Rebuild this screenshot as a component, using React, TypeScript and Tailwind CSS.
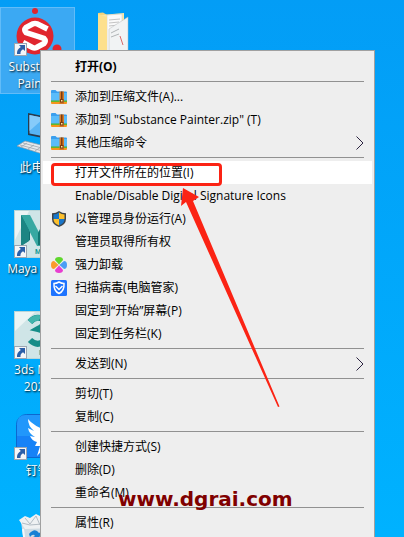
import React from 'react';

const ZipIcon = () => (
  <svg viewBox="0 0 16 16" className="size-4">
    <path d="M0 2q0-1 1-1h3.500L6 2.500h9q1 0 1 1V12H0z" fill="#3a9fee" />
    <path d="M0 4h16v7.500H0z" fill="#5abcfa" />
    <path d="M0 11.500h16V13H0z" fill="#62b92c" />
    <path d="M0 13h16v1q0 1-1 1H1q-1 0-1-1z" fill="#f7941d" />
    <path d="M8.500 2.500H13V15H8.500z" fill="#d97a25" />
    <path d="M10 2.500h1.500V10H10z" fill="#7a3c12" />
    <path d="M9 10h3.500v3.500H9z" fill="#7a3c12" />
    <path d="M10 11h1.500v1.500H10z" fill="#ffe9a0" />
  </svg>
);

const ShieldIcon = () => (
  <svg viewBox="0 0 16 16" className="size-4">
    <path d="M8 0Q5 2.200 1 2.200V8q0 5.500 7 8 7-2.500 7-8V2.200Q11 2.200 8 0z" fill="#3f4449" />
    <path d="M8 1.500Q5.500 3.300 2.500 3.500V8H8z" fill="#1976c9" />
    <path d="M8 1.500q2.500 1.800 5.500 2V8H8z" fill="#fdc02d" />
    <path d="M2.500 8q0 4.500 5.500 6.500V8z" fill="#fdc02d" />
    <path d="M13.500 8q0 4.500-5.500 6.500V8z" fill="#1976c9" />
  </svg>
);

const PetalsIcon = () => (
  <svg viewBox="0 0 16 16" className="size-4">
    <path d="M8 7.500L4 3Q4 0 8 0t4 3z" fill="#5fd72d" />
    <path d="M8 8.500L4 13q0 3 4 3t4-3z" fill="#e83ed0" />
    <path d="M7.500 8L3 4Q0 4 0 8t3 4z" fill="#fb9b2c" />
    <path d="M8.500 8L13 4q3 0 3 4t-3 4z" fill="#4c9df5" />
  </svg>
);

const GuardIcon = () => (
  <svg viewBox="0 0 16 16" className="size-4">
    <rect width="16" height="16" rx="1.500" fill="#1e74ff" />
    <path
      d="M8 2Q5.500 3.500 3 3.500q-.5 7.500 5 10 5.500-2.500 5-10Q10.500 3.500 8 2z"
      fill="none"
      stroke="#fff"
      strokeWidth="1.500"
    />
    <path d="M4.500 6L8 9.500 11.500 6" fill="none" stroke="#fff" strokeWidth="1.500" />
  </svg>
);

const ShortcutBadge = () => (
  <svg viewBox="0 0 13 13" className="absolute bottom-0 left-0 size-[13px]">
    <rect x=".5" y=".5" width="12" height="12" fill="#f4f6f8" stroke="#9aa6b2" />
    <path d="M5 2h6v6L9 6.200Q6 8 6.500 11H3Q2.500 6.500 6.800 3.900z" fill="#2b5fa8" />
  </svg>
);

const SubstanceIcon = () => (
  <svg viewBox="0 0 48 48" className="size-12">
    <circle cx="21" cy="3" r="3" fill="#e0262f" />
    <circle cx="43" cy="41" r="4.500" fill="#e0262f" />
    <circle cx="21" cy="28" r="18.500" fill="#e0262f" />
    <path
      d="M33.500 21L23 15.800Q21 15 19 15.800L12 19.500Q9.500 22 12 24.500L30 30.500Q32.500 33 30 35.500L22.500 39.500Q20.500 40.500 18.500 39.500L9 34.500"
      fill="none"
      stroke="#fff"
      strokeWidth="5.500"
    />
  </svg>
);

const FolderIcon = () => (
  <svg viewBox="0 0 48 48" className="size-12">
    <path d="M9 5l5-.5 5 3v43L9 47z" fill="#f3d27b" />
    <path d="M12 7l23-2v43H12z" fill="#fbe7a8" />
    <path d="M18 7l15-1v40H18z" fill="#fafafa" stroke="#c9c9c9" strokeWidth=".5" />
    <path d="M20 12l11-1M20 15l10-1M20 18l9-1" stroke="#c4c4c4" />
    <path d="M20 21l19-12v38H20z" fill="#f1f3f4" stroke="#b6babc" strokeWidth=".5" />
    <path d="M22 25l8-4M22 29l8-3" stroke="#b0b4b6" />
    <path d="M31 28l3 9" stroke="#d86a6a" />
    <path d="M9 6l9 3v42L9 46z" fill="#fde08d" />
  </svg>
);

const ComputerIcon = () => (
  <svg viewBox="0 0 48 48" className="size-12">
    <path d="M14 4l30 6v22L14 26z" fill="#2a3b4d" />
    <path d="M15.500 6L43 11.500V30L15.500 24.500z" fill="#58b4f4" />
    <path d="M15.500 6L30 9 15.500 22z" fill="#86cbfa" />
    <path d="M3 37l8-5 32 8-8 7z" fill="#e6eaed" stroke="#8e9aa5" strokeWidth=".7" />
    <path d="M6 36l30 8M9 34l30 8M13 34l-6 4M20 36l-6 4M27 38l-6 4M34 40l-6 4" stroke="#9aa4ad" strokeWidth=".8" />
  </svg>
);

const MayaIcon = () => (
  <svg viewBox="0 0 48 48" className="size-12">
    <rect x=".5" y=".5" width="47" height="47" fill="#cfe5e7" stroke="#b7d5d8" />
    <path d="M1 1h14L1 30z" fill="#ebf4f4" />
    <path d="M7 5l9 8v17l-9 6z" fill="#0f6e70" />
    <path d="M7 5h9l16 31h-9z" fill="#36a8a2" />
    <path d="M7 5v31l8-5V20z" fill="#1c8583" />
    <path d="M41 5h-8l-9 18v12h5z" fill="#117673" />
    <text x="21" y="44" fill="#149b98" className="font-['Roboto'] text-[7px] font-bold">MAYA</text>
  </svg>
);

const MaxIcon = () => (
  <svg viewBox="0 0 48 48" className="size-12">
    <rect x=".5" y=".5" width="47" height="47" fill="#cfe5e7" stroke="#b7d5d8" />
    <path d="M1 1h20L1 20z" fill="#ebf4f4" />
    <path
      d="M16 11Q21 5 28 7.500 35 12 24 18q13 3 7 12-8 6-15-1"
      fill="none"
      stroke="#168d88"
      strokeWidth="6"
    />
    <path d="M14 9q7-7 14-4l-4 5q-3-1-6 3z" fill="#42b5ad" />
    <text x="25" y="44" fill="#149b98" className="font-['Roboto'] text-[7px] font-bold">MAX</text>
  </svg>
);

const DingIcon = () => (
  <svg viewBox="0 0 48 48" className="size-12">
    <rect x="2.500" y="2.500" width="43" height="43" rx="10" fill="#1682f7" stroke="#0c67cf" />
    <path d="M3 12Q3 3 12 3h24q9 0 9 9v12H3z" fill="#2197fb" />
    <path
      d="M14 7q5 7 22 13 0 5-5 10l4 1-12 13 3-10h-5l2-4q-5-1-7-6l5 1q-6-3-7-9l6 3q-6-5-6-12z"
      fill="#fff"
    />
  </svg>
);

const RecycleIcon = () => (
  <svg viewBox="0 0 48 48" className="size-12">
    <path d="M7 8h35l-5 39H12z" fill="#cfdce4" />
    <path d="M5 7l6-4 5 2 6-4 6 3 7-2 8 6-3 7-29 1z" fill="#eef1f3" />
    <path d="M11 5l5 6 6-8 4 9 9-6M8 10l8 2 12-1" fill="none" stroke="#b2bcc4" />
    <path d="M9 16l4 30" stroke="#f4f8fa" strokeWidth="2" />
    <path d="M15 21q6-7 10-1l2-1-2 7-6-2 2-1q-2-3-5 1zM14 25l5 5-3 5z" fill="#1880d4" />
  </svg>
);

type DesktopItem = {
  label: string;
  icon: React.ReactNode;
  shortcut?: boolean;
  selected?: boolean;
};

const desktopItems: DesktopItem[] = [
  { label: 'Substance Painter', icon: <SubstanceIcon />, shortcut: true, selected: true },
  { label: '此电脑', icon: <ComputerIcon /> },
  { label: 'Maya 2019', icon: <MayaIcon />, shortcut: true },
  { label: '3ds Max 2020', icon: <MaxIcon />, shortcut: true },
  { label: '钉钉', icon: <DingIcon />, shortcut: true },
  { label: '', icon: <RecycleIcon /> },
];

type MenuItem = {
  label: string;
  icon?: React.ReactNode;
  bold?: boolean;
  submenu?: boolean;
  active?: boolean;
};

const menuGroups: MenuItem[][] = [
  [{ label: '打开(O)', bold: true }],
  [
    { label: '添加到压缩文件(A)...', icon: <ZipIcon /> },
    { label: '添加到 "Substance Painter.zip" (T)', icon: <ZipIcon /> },
    { label: '其他压缩命令', icon: <ZipIcon />, submenu: true },
  ],
  [
    { label: '打开文件所在的位置(I)', active: true },
    { label: 'Enable/Disable Digital Signature Icons' },
    { label: '以管理员身份运行(A)', icon: <ShieldIcon /> },
    { label: '管理员取得所有权' },
    { label: '强力卸载', icon: <PetalsIcon /> },
    { label: '扫描病毒(电脑管家)', icon: <GuardIcon /> },
    { label: '固定到“开始”屏幕(P)' },
    { label: '固定到任务栏(K)' },
  ],
  [{ label: '发送到(N)', submenu: true }],
  [{ label: '剪切(T)' }, { label: '复制(C)' }],
  [{ label: '创建快捷方式(S)' }, { label: '删除(D)' }, { label: '重命名(M)' }],
  [{ label: '属性(R)' }],
];

const DesktopIcon = ({ label, icon, shortcut, selected }: DesktopItem) => (
  <div className="h-[101px] w-[75px]">
    <div
      className={`flex flex-col items-center gap-0.5 border px-1 pb-px ${
        selected ? 'border-[#62bcf8] bg-[#3ba9f3]' : 'border-transparent'
      }`}
    >
      <div className="relative">
        {icon}
        {shortcut && <ShortcutBadge />}
      </div>
      <span className="text-center text-[12px] leading-[17px] text-white [text-shadow:1px_1px_2px_#000]">
        {label}
      </span>
    </div>
  </div>
);

const MenuRow = ({ label, icon, bold, submenu, active }: MenuItem) => (
  <li className="relative">
    <button
      type="button"
      className={`flex h-[23px] w-full items-center pr-2 pl-2 text-left text-[12px] whitespace-nowrap ${
        active ? 'bg-white' : ''
      } ${bold ? 'font-bold' : ''}`}
    >
      <span className="mr-2 size-4 shrink-0">{icon}</span>
      <span className="grow">{label}</span>
      {submenu && (
        <svg viewBox="0 0 8 14" className="h-3.5 w-2" fill="none" stroke="#2b2340">
          <path d="M.5 .5L7 7 .5 13.500" />
        </svg>
      )}
    </button>
    {active && (
      <span className="pointer-events-none absolute top-0.5 left-2 h-[23px] w-[171px] rounded-[4px] border-3 border-[#fb2314]" />
    )}
  </li>
);

const ContextMenu = () => (
  <nav className="absolute top-[50px] right-[29px] left-10 border border-[#a0a0a0] bg-[#eeeeee] px-0.5 pt-1 pb-2 text-black">
    {menuGroups.map((group, i) => (
      <ul key={i}>
        {i > 0 && <li className="mx-2 my-[3px] h-px bg-[#919191]" />}
        {group.map((item) => (
          <MenuRow key={item.label} {...item} />
        ))}
      </ul>
    ))}
  </nav>
);

const App = () => {
  return (
    <main className="relative h-screen overflow-hidden bg-linear-to-b from-[#039df6] to-[#00b2ff] font-['Open_Sans','Noto_Sans_CJK_SC',sans-serif]">
      <div className="flex pt-[7px]">
        <div className="flex flex-col">
          {desktopItems.map((item, i) => (
            <DesktopIcon key={i} {...item} />
          ))}
        </div>
        <DesktopIcon label="" icon={<FolderIcon />} />
      </div>

      <ContextMenu />

      <svg
        viewBox="0 0 100 220"
        className="pointer-events-none absolute top-[188px] left-[180px] h-[220px] w-[100px]"
      >
        <path d="M3 0L19 9 13 13 99.500 218.500 98 219 6 14 1 18z" fill="#fb2314" />
      </svg>

      <p className="pointer-events-none absolute top-[487px] left-[118px] font-['DejaVu_Sans'] text-[20px] leading-6 font-bold text-[#800000]">
        www.dgrai.com
      </p>
    </main>
  );
};

export default App;
